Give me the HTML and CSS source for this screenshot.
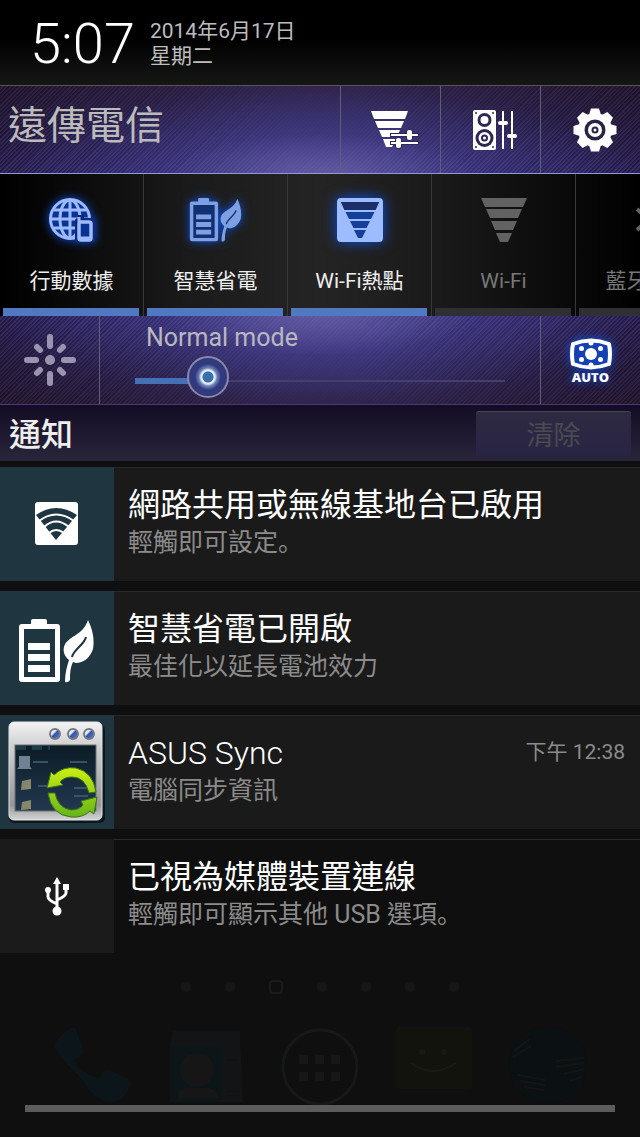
FILE: index.html
```html
<!DOCTYPE html>
<html lang="zh-Hant">
<head>
<meta charset="utf-8">
<meta name="viewport" content="width=device-width, initial-scale=1">
<title>通知</title>
<link rel="stylesheet" href="styles.css">
</head>
<body>
<svg class="defs" aria-hidden="true">
  <defs>
    <symbol id="battery-leaf" viewBox="0 0 76 64">
      <path class="cell" d="M3 8h35v53H3z"/>
      <path d="M12 5V2q0-2 2-2h12q2 0 2 2v3h10q3 0 3 3v52q0 3-3 3H3q-3 0-3-3V8q0-3 3-3zM5 10v48h31V10z" fill-rule="evenodd"/>
      <path d="M9 24h22v7H9zM9 35h22v7H9zM9 46h22v7H9z"/>
      <path d="M69 1C73 9 76 20 74 30C71 39 64 44 57 44L54 43C51 49 51 56 51 61Q49 64 46 63C46 54 48 47 50 41C45 37 44 32 45 28C48 17 64 17 69 1Z"/>
      <path class="vein" d="M67 18C66 25 54 31 53 38" fill="none" stroke-width="2"/>
    </symbol>
  </defs>
</svg>
<main class="shade">
  <header class="status">
    <time class="clock">5:07</time>
    <div class="date"><span>2014年6月17日</span><span>星期二</span></div>
  </header>

  <section class="purple carrier">
    <h1 class="carrier-name">遠傳電信</h1>
    <button class="tool" type="button" aria-label="Wi-Fi 設定">
      <svg width="48" height="40" viewBox="0 0 48 40" fill="#fff">
        <path d="M0 1h37l-3 8H3zM4 11h29l-3 7H7zM8 20h21l-3 7H11zM12 29h13l-4 8h-6z"/>
        <g stroke="#302858" fill="#302858" stroke-width="2"><path d="M20 24h27v2H20zM20 32h27v2H20z"/><rect x="36" y="20" width="5" height="10" rx="2"/><rect x="25" y="28" width="5" height="10" rx="2"/></g>
        <path d="M20 24h27v2H20zM20 32h27v2H20z"/><rect x="36" y="20" width="5" height="10" rx="2"/><rect x="25" y="28" width="5" height="10" rx="2"/>
      </svg>
    </button>
    <button class="tool" type="button" aria-label="音效">
      <svg width="46" height="42" viewBox="0 0 46 42" fill="#fff">
        <rect x="1" y="1" width="23" height="40" rx="2"/>
        <g fill="#2e2654"><circle cx="12.500" cy="11" r="7"/><circle cx="12.500" cy="29" r="9"/><circle cx="4" cy="4" r="1"/><circle cx="21" cy="4" r="1"/><circle cx="4" cy="38" r="1"/><circle cx="21" cy="38" r="1"/></g>
        <circle cx="12.500" cy="11" r="4"/><circle cx="12.500" cy="29" r="6"/>
        <circle cx="12.500" cy="29" r="3.500" fill="#2e2654"/><circle cx="12.500" cy="29" r="1.500"/>
        <path d="M30 2h2v38h-2zM39 2h2v38h-2z"/><rect x="26" y="12" width="10" height="4" rx="2"/><rect x="35" y="25" width="10" height="4" rx="2"/>
      </svg>
    </button>
    <button class="tool" type="button" aria-label="設定">
      <svg width="44" height="44" viewBox="-22 -22 44 44" fill="#fff">
        <circle r="17"/>
        <path id="teeth" d="M-6-15L-4-21.500H4L6-15zM-6 15L-4 21.500H4L6 15zM15-6L21.500-4V4L15 6zM-15-6L-21.500-4V4L-15 6z"/>
        <use href="#teeth" transform="rotate(45)"/>
        <circle r="10.500" fill="#2b2248"/><circle r="7"/><circle r="3.500" fill="#2b2248"/><circle r="1.500"/>
      </svg>
    </button>
  </section>

  <nav class="tiles">
    <button class="tile on" type="button">
      <svg width="46" height="44" viewBox="0 0 46 44" fill="none" stroke="#9dbaff" stroke-width="3">
        <circle cx="21" cy="21" r="19.500" fill="#0a3494"/>
        <path d="M2 21h38M5 12h32M5 30h32M21 2v38"/><ellipse cx="21" cy="21" rx="10" ry="19"/>
        <path d="M26 44V23q0-3 3-3v-3h6v3h11v24z" fill="#0c2a78" stroke="none"/>
        <rect x="30" y="24" width="12" height="18" rx="2" fill="#0b3290" stroke-width="3.500"/><path d="M30 19v5M30 40h12" stroke-width="3"/>
      </svg>
      <span>行動數據</span>
    </button>
    <button class="tile on" type="button">
      <svg class="eco" width="50" height="42"><use href="#battery-leaf"/></svg>
      <span>智慧省電</span>
    </button>
    <button class="tile on hot" type="button">
      <svg width="46" height="44" viewBox="0 0 46 44">
        <rect width="46" height="44" rx="4" fill="#9dbbff"/>
        <path d="M4 4h38l-3.500 8h-31zM8.500 14h29l-3.500 7H12zM13 23h20l-3.500 7h-13zM17 32h12l-4 8h-4z" fill="#153e9b"/>
        <path d="M4 4h38l-3.500 8h-31z" fill="#1c2f68"/>
      </svg>
      <span>Wi-Fi熱點</span>
    </button>
    <button class="tile" type="button">
      <svg width="46" height="44" viewBox="0 0 46 44" fill="#626262"><path d="M0 0h46l-4 9H4zM5 11h36l-4 9H9zM10 23h26l-4 9H14zM15 35h16l-4 9h-8z"/></svg>
      <span>Wi-Fi</span>
    </button>
    <button class="tile" type="button">
      <svg width="46" height="44" viewBox="0 0 46 44" fill="none" stroke="#626262" stroke-width="4"><path d="M12 11l22 20-11 10V3l11 9-22 20"/></svg>
      <span>藍牙</span>
    </button>
  </nav>

  <section class="purple brightness">
    <div class="sun">
      <svg width="52" height="52" viewBox="-26 -26 52 52" stroke="#9a94b0" stroke-width="6" stroke-linecap="round">
        <circle r="5" fill="#9a94b0" stroke="none"/>
        <path d="M0-23V-14M0 23V14M-23 0H-14M23 0H14M-13-13l3 3M13-13l-3 3M-13 13l3-3M13 13l-3-3"/>
      </svg>
    </div>
    <div class="level">
      <label for="level">Normal mode</label>
      <input id="level" type="range" min="0" max="100" value="16">
    </div>
    <button class="tool auto" type="button">
      <svg width="44" height="32" viewBox="0 0 44 32" fill="#fff">
        <path d="M4 6Q22-1 40 6Q42 16 40 26Q22 33 4 26Q2 16 4 6z" fill="#1440b4" stroke="#fff" stroke-width="4" stroke-linejoin="round"/>
        <circle cx="22" cy="16" r="6"/><circle cx="12.500" cy="10.500" r="2.500"/><circle cx="31.500" cy="10.500" r="2.500"/><circle cx="12.500" cy="21.500" r="2.500"/><circle cx="31.500" cy="21.500" r="2.500"/><circle cx="22" cy="5" r="2.500"/><circle cx="22" cy="27" r="2.500"/>
      </svg>
      <span>AUTO</span>
    </button>
  </section>

  <header class="heading">
    <h2>通知</h2>
    <button class="clear" type="button" disabled>清除</button>
  </header>

  <ul class="list">
    <li class="note">
      <div class="thumb">
        <svg width="44" height="44" viewBox="0 0 44 44">
          <rect x="0" y="0" width="43" height="43" rx="3" fill="#fff"/>
          <path d="M1 13Q21-1 42 13L21 38z" fill="#1f3640"/>
          <path d="M4 19Q21 6 39 19M9 25Q21 14 34 25M14 31Q21 25 29 31" fill="none" stroke="#fff" stroke-width="2"/>
        </svg>
      </div>
      <div class="text"><h3>網路共用或無線基地台已啟用</h3><p>輕觸即可設定<span lang="zh-Hans">。</span></p></div>
    </li>
    <li class="note">
      <div class="thumb"><svg class="battery" width="76" height="64"><use href="#battery-leaf"/></svg></div>
      <div class="text"><h3>智慧省電已開啟</h3><p>最佳化以延長電池效力</p></div>
    </li>
    <li class="note">
      <div class="thumb">
        <svg width="98" height="104" viewBox="0 0 98 104">
          <defs>
            <linearGradient id="frame" x2="0" y2="1"><stop offset="0" stop-color="#f3f3f3"/><stop offset=".25" stop-color="#cfcfd1"/><stop offset=".85" stop-color="#969798"/><stop offset="1" stop-color="#d5d5d5"/></linearGradient>
            <linearGradient id="screen" x2="0" y2="1"><stop offset="0" stop-color="#0c1c26"/><stop offset="1" stop-color="#223850"/></linearGradient>
            <linearGradient id="ball" x2="1" y2="1"><stop offset=".35" stop-color="#e8edf8"/><stop offset=".5" stop-color="#3154b4"/><stop offset="1" stop-color="#5c83da"/></linearGradient>
            <linearGradient id="green" x2="0" y2="1"><stop offset="0" stop-color="#ccee12"/><stop offset="1" stop-color="#62b51a"/></linearGradient>
          </defs>
          <rect x="1" y="5" width="96" height="98" rx="5" fill="#0b171d"/>
          <rect x="1" y="2" width="93" height="98" rx="5" fill="url(#frame)" stroke="#e4e4e4"/>
          <rect x="7" y="25" width="81" height="66" fill="url(#screen)" stroke="#6c7075"/>
          <path d="M11 36h11v11l2 2H9l2-2z" fill="#708191"/><path d="M14 61l9-2v10l-10 1zM14 82l9-2v9l-10 1z" fill="#85866b"/>
          <path d="M25 42h15M30 66h10M62 42h17M66 68h14M66 76h14" stroke="#3a5266" stroke-width="2"/><path d="M8 28h34" stroke="#1d3c4a" stroke-width="4" stroke-dasharray="10 6"/>
          <g fill="url(#ball)" stroke="#77797f" stroke-width="2"><circle cx="47" cy="14" r="5"/><circle cx="65" cy="14" r="5"/><circle cx="81" cy="14" r="5"/></g>
          <path d="M39 68L43 52L46 55Q55 46 68 48Q85 52 88 72L81 73Q77 57 64 57Q56 57 52 62L55 65ZM40 73L47 73Q50 88 63 90Q71 90 75 85L73 81L89 77L86 94L82 91Q75 98 63 97Q43 95 40 73Z" fill="url(#green)" stroke="#3c721b"/>
        </svg>
      </div>
      <div class="text"><h3 class="latin">ASUS Sync</h3><p>電腦同步資訊</p></div>
      <time class="when">下午 12:38</time>
    </li>
    <li class="note plain">
      <div class="thumb">
        <svg width="26" height="40" viewBox="0 0 26 40" fill="#fff">
          <path d="M13 6v28M13 28q-9-4-9-7v-6M13 24q9-4 9-7v-5" fill="none" stroke="#fff" stroke-width="3"/>
          <path d="M13 1l4 7H9zM19 8h6v6h-6z"/><circle cx="4" cy="14" r="3"/><circle cx="13" cy="35" r="4.500"/>
        </svg>
      </div>
      <div class="text"><h3>已視為媒體裝置連線</h3><p>輕觸即可顯示其他 USB 選項<span lang="zh-Hans">。</span></p></div>
    </li>
  </ul>

  <footer class="home" aria-hidden="true">
    <div class="pages"><i></i><i></i><i class="current"></i><i></i><i></i><i></i><i></i></div>
    <div class="dock">
      <svg width="80" height="80"><path d="M16 5q4-5 8-1l8 22q-4 8-9 8 3 14 24 19l3-5q4-5 8-3l17 8q5 3 3 8-5 16-20 16Q42 76 28 52 8 34 3 22 2 14 16 5z" fill="#0c1519"/></svg>
      <svg width="80" height="80"><path d="M7 6h67l3 71H4V20z" fill="#131415"/><path d="M4 21h52v56H4z" fill="#0c1518"/><circle cx="31" cy="45" r="17" fill="#161616"/><path d="M11 73q1-10 11-10h20q9 0 10 10z" fill="#161616"/><path d="M60 35h12M60 66h14M60 71h14" stroke="#0f1112"/></svg>
      <svg width="80" height="80"><circle cx="40" cy="42" r="37" fill="none" stroke="#171918" stroke-width="3"/><path d="M19 30h9v9h-9zM35 30h9v9h-9zM51 30h9v9h-9zM19 47h9v9h-9zM35 47h9v9h-9zM51 47h9v9h-9z" fill="#161718"/></svg>
      <svg width="80" height="80"><rect x="2" y="2" width="76" height="62" rx="3" fill="#11130c"/><g fill="#181a16"><circle cx="28" cy="27" r="3"/><circle cx="50" cy="27" r="3"/></g><path d="M17 38q22 16 45 0" fill="none" stroke="#181a16" stroke-width="2"/></svg>
      <svg width="80" height="80"><circle cx="40" cy="40" r="39" fill="#0b1012"/><path d="M6 26l16-12M5 32l18-11M10 50l27 5M12 56l25 4M16 62l20 3M48 36l28-3M48 42l28-4M56 49l20-5M62 56l12-4" stroke="#131617" stroke-width="2"/></svg>
    </div>
    <div class="handle"></div>
  </footer>
</main>
</body>
</html>
```
FILE: styles.css
```css
* { box-sizing: border-box; }

body {
  margin: 0;
  background: #0e0f0e;
  color: #fff;
  font-family: Roboto, "Noto Sans CJK TC", sans-serif;
}

h1, h2, h3, p, ul { margin: 0; padding: 0; font-weight: 400; }

button { border: 0; padding: 0; background: none; color: inherit; font: inherit; }

svg { display: block; flex: none; }

.defs { position: absolute; width: 0; height: 0; }

.shade {
  display: flex;
  flex-direction: column;
  min-height: 100vh;
  border-bottom: 1px solid #fff;
}

/* clock and date */
.status {
  display: flex;
  align-items: center;
  gap: 15px;
  height: 85px;
  padding: 3px 30px 0;
  background: linear-gradient(#000 45%, #151715);
}

.clock { font-size: 56px; font-weight: 300; line-height: 64px; }

.date {
  display: flex;
  flex-direction: column;
  color: #bdbdbd;
  font-size: 21px;
  line-height: 25px;
}

/* striped purple bars */
.purple {
  position: relative;
  display: flex;
  height: 89px;
}

.purple::before {
  content: "";
  position: absolute;
  inset: 0;
  background: repeating-linear-gradient(135deg, #0a061880 0 1px, transparent 2px 3px);
  mask-image: linear-gradient(90deg, #000, #0001 45%, #0001 55%, #000);
}

.purple > * { position: relative; }

.carrier {
  border-top: 1px solid #565456;
  border-bottom: 1px solid #8f9bd8;
  background:
    radial-gradient(ellipse 50% 100% at 50% 105%, #665ea3 0%, #4c459066 50%, transparent 100%),
    linear-gradient(90deg, #29141c66, transparent 40% 60%, #29141c66),
    linear-gradient(#32264e, #352e6a 45%, #423c98);
}

.carrier-name {
  flex: 1;
  padding-left: 8px;
  color: #bcbbbb;
  font-size: 39px;
  line-height: 80px;
}

.tool {
  display: flex;
  flex: 0 0 100px;
  align-items: center;
  justify-content: center;
  padding-left: 8px;
  border-left: 1px solid #625d72;
}

/* quick toggles */
.tiles {
  display: flex;
  height: 142px;
  overflow: hidden;
  background: linear-gradient(90deg, #000, #1b1b1b 30%, #242424 50%, #191919 70%, #000);
}

.tile {
  display: flex;
  flex: 0 0 22.5%;
  flex-direction: column;
  align-items: center;
  border-right: 1px solid #393939;
  color: #777;
  font-size: 21px;
  line-height: 30px;
}

.tile svg { height: 44px; margin: 24px 0; }

.tile::after {
  content: "";
  align-self: stretch;
  height: 8px;
  margin: auto 4px 0 3px;
  background: #302f34;
}

.tile.on { color: #eee; }
.tile.on::after { background: #5079c2; }
.tile.on svg { filter: drop-shadow(0 0 5px #0d50e0); }
.tile.hot svg { filter: drop-shadow(0 0 7px #0d50e0); }
.tile:last-child span { width: 84px; text-align: left; }

.tile .eco { width: 54px; fill: #7d9fe3; --cell: #122f70; --vein: #15336f; }
.battery { margin-top: 6px; fill: #fff; --cell: #1f3640; --vein: #1f3640; }
.cell { fill: var(--cell); }
.vein { stroke: var(--vein); }

/* brightness */
.brightness {
  border-bottom: 1px solid #493a70;
  background:
    radial-gradient(ellipse 50% 100% at 50% -5%, #665ea3 0%, #4c459066 50%, transparent 100%),
    linear-gradient(90deg, #29141c66, transparent 40% 60%, #29141c66),
    linear-gradient(#423c98, #352e6a 55%, #32264e);
}

.sun {
  display: flex;
  flex: 0 0 100px;
  align-items: center;
  justify-content: center;
  border-right: 1px solid #625d72;
}

.level {
  display: flex;
  flex: 1;
  flex-direction: column;
  padding: 7px 35px 0;
}

.level label {
  padding-left: 11px;
  color: #b9b8bf;
  font-size: 25px;
  line-height: 30px;
}

.level input {
  width: 100%;
  height: 42px;
  margin: 3px 0 0;
  appearance: none;
  background:
    linear-gradient(#4570b4, #4570b4) 0 60% / 16% 6px no-repeat,
    linear-gradient(#463e6c, #463e6c) 0 60% / 100% 2px no-repeat;
}

.level input::-webkit-slider-thumb {
  width: 42px;
  height: 42px;
  appearance: none;
  border: 2px solid #8a86ac;
  border-radius: 50%;
  background: radial-gradient(circle, #3a70aa 0 5px, #e6edf8 6px 7px, #6f86bd 9px, #313a7c 13px);
}

.auto {
  flex-direction: column;
  padding: 2px 0 0;
  font-family: "Open Sans", sans-serif;
  font-size: 13px;
  font-weight: 800;
  line-height: 13px;
}

.auto svg { margin-bottom: 1px; filter: drop-shadow(0 0 5px #0d50e0); }
.auto span { text-shadow: 0 0 8px #0d50e0; }

/* notifications */
.heading {
  display: flex;
  align-items: center;
  justify-content: space-between;
  height: 56px;
  padding: 0 9px;
  background: linear-gradient(#130c24, #29253b);
}

.heading h2 {
  padding-top: 3px;
  color: #eee;
  font-size: 32px;
  font-weight: 500;
  line-height: 40px;
}

.clear {
  width: 155px;
  height: 45px;
  border-top: 1px solid #48445a;
  border-radius: 3px;
  background: linear-gradient(#2e2a42, #282444);
  color: #4b4a50;
  font-size: 27px;
}

.list {
  display: flex;
  flex-direction: column;
  gap: 10px;
  padding-top: 6px;
  list-style: none;
}

.note {
  display: flex;
  height: 114px;
  background: #1a1a1a;
  box-shadow: inset 0 1px #292929;
}

.thumb {
  display: flex;
  flex: 0 0 114px;
  align-items: center;
  justify-content: center;
  background: #1f3640;
}

.text { flex: 1; padding: 18px 0 0 14px; }

.note h3 { font-size: 32px; line-height: 40px; }
.note .latin { font-weight: 300; }

.note p { color: #8b8b8b; font-size: 25px; line-height: 36px; }
.note p span { font-family: "Noto Sans CJK SC", sans-serif; line-height: 1; }

.when {
  padding: 21px 15px 0;
  color: #8b8b8b;
  font-size: 21px;
  line-height: 32px;
}

.plain { background: #0f0f0f; }
.plain .thumb { background: #1b1b1b; }

/* dimmed home screen */
.home {
  display: flex;
  flex: 1;
  flex-direction: column;
  padding: 27px 25px 25px;
}

.pages {
  display: flex;
  align-items: center;
  justify-content: center;
  gap: 34px;
  height: 14px;
}

.pages i { width: 10px; height: 10px; border-radius: 4px; background: #151617; }
.pages .current { width: 14px; height: 14px; border: 2px solid #1b1b1a; background: none; }

.dock {
  display: flex;
  flex: 1;
  align-items: flex-end;
  padding: 0 10px;
}

.dock svg { flex: 1; width: 0; margin: 0 17px; }

.handle { height: 7px; background: #5c5c5c; }
```
